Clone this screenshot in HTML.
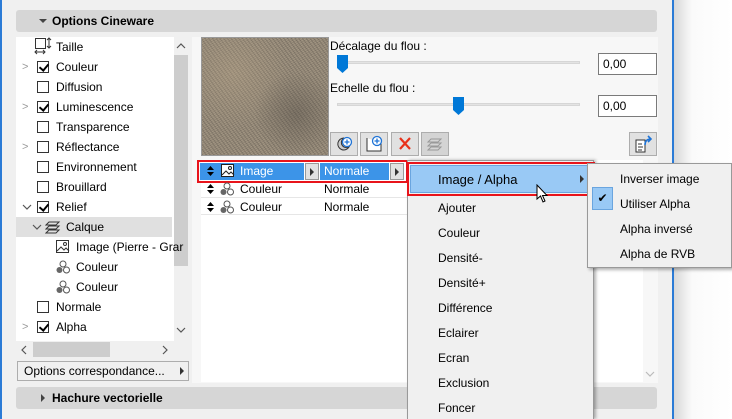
<!DOCTYPE html><html><head><meta charset="utf-8"><style>
*{box-sizing:border-box;margin:0;padding:0}
html,body{width:732px;height:419px;overflow:hidden}
body{background:#f0f0f0;font-family:"Liberation Sans",sans-serif;font-size:12px;color:#000;position:relative}
.a{position:absolute}
.hdr{background:#d6d6d6;border-radius:3px;font-weight:bold;font-size:12px;padding-left:36px;line-height:22px}
.tri{position:absolute;left:23px;top:9px;width:0;height:0;border-left:4px solid transparent;border-right:4px solid transparent;border-top:4px solid #444}
.trir{position:absolute;left:25px;top:7px;border-top:4px solid transparent;border-bottom:4px solid transparent;border-left:4px solid #444}
.row{position:absolute;height:20px;line-height:20px;white-space:nowrap}
.cb{position:absolute;width:12px;height:12px;border:1px solid #333;background:#fff;top:4px}
.cb.c::after{content:"";position:absolute;left:3px;top:0px;width:4px;height:7px;border:solid #000;border-width:0 2px 2px 0;transform:rotate(40deg)}
.chev{position:absolute;color:#999;font-size:11px}
.inp{background:#fff;border:1px solid #7a7a7a;padding-left:4px;line-height:20px}
.btn{background:#e1e1e1;border:1px solid #adadad}
.mi{position:absolute;left:438px;font-size:12px}
.si{position:absolute;left:620px;font-size:12px}
</style></head><body>
<div class="a" style="left:0;top:0;width:2px;height:419px;background:#2b7bd6"></div>
<div class="a" style="left:672px;top:0;width:2px;height:419px;background:#2b7bd6"></div>
<div class="a" style="left:674px;top:0;width:58px;height:419px;background:linear-gradient(90deg,#d8d8d8,#fafafa 18px,#fff)"></div>

<div class="a hdr" style="left:16px;top:10px;width:641px;height:22px"><span class="tri"></span>Options Cineware</div>

<!-- tree -->
<div class="a" style="left:16px;top:37px;width:158px;height:304px;background:#fff"></div>
<div class="a" style="left:174px;top:37px;width:17px;height:304px;background:#f0f0f0"></div>
<div class="a" style="left:174px;top:55px;width:14px;height:211px;background:#cdcdcd"></div>
<svg class="a" style="left:176px;top:42px" width="10" height="8"><path d="M1 6l4-4 4 4" fill="none" stroke="#555" stroke-width="1.2"/></svg>
<svg class="a" style="left:176px;top:326px" width="10" height="8"><path d="M1 2l4 4 4-4" fill="none" stroke="#555" stroke-width="1.2"/></svg>
<div class="a" style="left:16px;top:341px;width:175px;height:17px;background:#f0f0f0"></div>
<div class="a" style="left:33px;top:342px;width:77px;height:15px;background:#cdcdcd"></div>
<svg class="a" style="left:20px;top:345px" width="8" height="10"><path d="M6 1L2 5l4 4" fill="none" stroke="#555" stroke-width="1.2"/></svg>
<svg class="a" style="left:161px;top:345px" width="8" height="10"><path d="M2 1l4 4-4 4" fill="none" stroke="#555" stroke-width="1.2"/></svg>
<div class="a" style="left:16px;top:217px;width:156px;height:20px;background:#e0e0e0"></div>

<div class="row" style="left:36px;top:37px"><svg class="a" style="left:-2px;top:0" width="18" height="18"><rect x="1.5" y="1.5" width="10" height="10" fill="none" stroke="#333"/><path d="M15 1v10M13 3l2-2 2 2M13 9l2 2 2-2M1 15h10M3 13l-2 2 2 2M9 13l2 2-2 2" fill="none" stroke="#333"/></svg><span style="position:absolute;left:20px">Taille</span></div>
<div class="row" style="left:22px;top:57px"><span class="chev">&gt;</span><span class="cb c" style="left:15px"></span><span style="position:absolute;left:34px">Couleur</span></div>
<div class="row" style="left:22px;top:77px"><span class="cb" style="left:15px"></span><span style="position:absolute;left:34px">Diffusion</span></div>
<div class="row" style="left:22px;top:97px"><span class="chev">&gt;</span><span class="cb c" style="left:15px"></span><span style="position:absolute;left:34px">Luminescence</span></div>
<div class="row" style="left:22px;top:117px"><span class="cb" style="left:15px"></span><span style="position:absolute;left:34px">Transparence</span></div>
<div class="row" style="left:22px;top:137px"><span class="chev">&gt;</span><span class="cb" style="left:15px"></span><span style="position:absolute;left:34px">Réflectance</span></div>
<div class="row" style="left:22px;top:157px"><span class="cb" style="left:15px"></span><span style="position:absolute;left:34px">Environnement</span></div>
<div class="row" style="left:22px;top:177px"><span class="cb" style="left:15px"></span><span style="position:absolute;left:34px">Brouillard</span></div>
<div class="row" style="left:22px;top:197px"><svg class="a" style="left:0;top:7px" width="10" height="7"><path d="M1 1l4 4 4-4" fill="none" stroke="#555" stroke-width="1.2"/></svg><span class="cb c" style="left:15px"></span><span style="position:absolute;left:34px">Relief</span></div>
<div class="row" style="left:32px;top:217px"><svg class="a" style="left:0;top:7px" width="10" height="7"><path d="M1 1l4 4 4-4" fill="none" stroke="#555" stroke-width="1.2"/></svg><svg class="a" style="left:13px;top:3px" width="16" height="14"><path d="M4 2h10l-3 3H1zM4 6h10l-3 3H1zM4 10h10l-3 3H1z" fill="none" stroke="#333"/></svg><span style="position:absolute;left:34px">Calque</span></div>
<div class="row" style="left:56px;top:237px"><svg class="a" style="left:0;top:3px" width="14" height="14"><rect x=".5" y=".5" width="12" height="12" fill="#fff" stroke="#333"/><path d="M1 11l4-4 3 3 2-2 3 3" fill="none" stroke="#333"/><circle cx="9" cy="4" r="1.5" fill="none" stroke="#333"/></svg><span style="position:absolute;left:20px">Image (Pierre - Grar</span></div>
<div class="row" style="left:56px;top:257px"><svg class="a" style="left:0;top:3px" width="14" height="14"><circle cx="7" cy="4" r="3" fill="#fff" stroke="#555"/><circle cx="3.5" cy="10" r="3" fill="#666"/><circle cx="10.5" cy="10" r="3" fill="#fff" stroke="#555"/></svg><span style="position:absolute;left:20px">Couleur</span></div>
<div class="row" style="left:56px;top:277px"><svg class="a" style="left:0;top:3px" width="14" height="14"><circle cx="7" cy="4" r="3" fill="#fff" stroke="#555"/><circle cx="3.5" cy="10" r="3" fill="#666"/><circle cx="10.5" cy="10" r="3" fill="#fff" stroke="#555"/></svg><span style="position:absolute;left:20px">Couleur</span></div>
<div class="row" style="left:22px;top:297px"><span class="cb" style="left:15px"></span><span style="position:absolute;left:34px">Normale</span></div>
<div class="row" style="left:22px;top:317px"><span class="chev">&gt;</span><span class="cb c" style="left:15px"></span><span style="position:absolute;left:34px">Alpha</span></div>

<div class="a" style="left:17px;top:361px;width:172px;height:20px;border:1px solid #adadad;background:#f0f0f0;padding-left:6px;line-height:18px">Options correspondance...<span style="position:absolute;right:4px;top:5px;border-top:4px solid transparent;border-bottom:4px solid transparent;border-left:4px solid #333"></span></div>

<!-- right panel -->
<div class="a" style="left:192px;top:37px;width:466px;height:346px;background:#f7f7f7"></div>
<div class="a" style="left:201px;top:37px;width:128px;height:119px;border:1px solid #999;background:
radial-gradient(circle at 75% 65%,rgba(70,65,60,.35),transparent 35%),
radial-gradient(circle at 25% 30%,rgba(190,170,140,.35),transparent 45%),
repeating-linear-gradient(53deg,rgba(60,55,50,.25) 0 1px,transparent 1px 3px),
repeating-linear-gradient(-29deg,rgba(200,185,160,.3) 0 1px,transparent 1px 2px),#8f8474"></div>
<div class="a" style="left:330px;top:39px">Décalage du flou :</div>
<div class="a" style="left:337px;top:61px;width:243px;height:3px;background:#e3e3e3;border:1px solid #d6d6d6"></div>
<svg class="a" style="left:337px;top:55px" width="11" height="18"><path d="M0 0h11v13l-5.5 5L0 13z" fill="#0078d7"/></svg>
<div class="a inp" style="left:598px;top:53px;width:59px;height:22px">0,00</div>
<div class="a" style="left:330px;top:81px">Echelle du flou :</div>
<div class="a" style="left:337px;top:103px;width:243px;height:3px;background:#e3e3e3;border:1px solid #d6d6d6"></div>
<svg class="a" style="left:453px;top:97px" width="11" height="18"><path d="M0 0h11v13l-5.5 5L0 13z" fill="#0078d7"/></svg>
<div class="a inp" style="left:598px;top:95px;width:59px;height:22px">0,00</div>

<div class="a btn" style="left:330px;top:132px;width:28px;height:24px"><svg width="26" height="22"><path d="M13 5a6 6 0 1 0 5 9a5 5 0 0 1-5-9" fill="#ccc" stroke="#333"/><circle cx="16" cy="9" r="4.5" fill="#fff" stroke="#1e73d6" stroke-width="1.3"/><path d="M16 6.5v5M13.5 9h5" stroke="#1e73d6" stroke-width="1.3"/></svg></div>
<div class="a btn" style="left:360px;top:132px;width:28px;height:24px"><svg width="26" height="22"><path d="M6 5v13h14v-8" fill="#fff" stroke="#333"/><circle cx="16" cy="8" r="4.5" fill="#fff" stroke="#1e73d6" stroke-width="1.3"/><path d="M16 5.5v5M13.5 8h5" stroke="#1e73d6" stroke-width="1.3"/></svg></div>
<div class="a btn" style="left:391px;top:132px;width:28px;height:24px"><svg width="26" height="22"><path d="M8 5l10 11M18 5L8 16" stroke="#e8311a" stroke-width="2.2"/></svg></div>
<div class="a btn" style="left:421px;top:132px;width:28px;height:24px;background:#d4d4d4"><svg width="26" height="22"><path d="M9 6h10l-3 3H6zM9 10h10l-3 3H6zM9 14h10l-3 3H6z" fill="none" stroke="#999"/></svg></div>
<div class="a btn" style="left:629px;top:132px;width:28px;height:24px"><svg width="26" height="22"><path d="M6 7h9v12H6z" fill="#fff" stroke="#333"/><path d="M8 11h4M8 14h5M8 17h4" stroke="#333"/><path d="M15 12c0-4 2-6 6-6M18 3l3 3-3 3" fill="none" stroke="#1e73d6" stroke-width="1.6"/></svg></div>

<!-- layers list -->
<div class="a" style="left:201px;top:160px;width:442px;height:222px;background:#fff"></div>
<svg class="a" style="left:645px;top:371px" width="10" height="7"><path d="M1 1l4 4 4-4" fill="none" stroke="#bbb" stroke-width="1.2"/></svg>
<div class="a" style="left:201px;top:197px;width:206px;height:1px;background:#e6e6e6"></div>
<div class="a" style="left:201px;top:214px;width:206px;height:1px;background:#e6e6e6"></div>
<div class="a" style="left:197px;top:160px;width:211px;height:23px;border:2px solid #e8141b"></div>
<div class="a" style="left:200px;top:163px;width:104px;height:17px;background:#3c94e8"></div>
<div class="a" style="left:305px;top:163px;width:14px;height:17px;background:#e1e1e1;border:1px solid #999"><span class="a" style="left:4px;top:4px;border-top:4px solid transparent;border-bottom:4px solid transparent;border-left:4px solid #333"></span></div>
<div class="a" style="left:320px;top:163px;width:69px;height:17px;background:#3c94e8"></div>
<div class="a" style="left:390px;top:163px;width:14px;height:17px;background:#e1e1e1;border:1px solid #999"><span class="a" style="left:4px;top:4px;border-top:4px solid transparent;border-bottom:4px solid transparent;border-left:4px solid #333"></span></div>
<svg class="a" style="left:207px;top:165px" width="7" height="12"><path d="M0 5l3.5-4 3.5 4zM0 7l3.5 4 3.5-4z" fill="#000"/></svg>
<svg class="a" style="left:221px;top:164px" width="14" height="14"><rect x=".5" y=".5" width="12" height="12" fill="#fff" stroke="#222"/><path d="M1 11l4-4 3 3 2-2 3 3" fill="none" stroke="#222"/><circle cx="9" cy="4" r="1.5" fill="none" stroke="#222"/></svg>
<div class="a" style="left:240px;top:164px;color:#fff">Image</div>
<div class="a" style="left:324px;top:164px;color:#fff">Normale</div>
<svg class="a" style="left:207px;top:183px" width="7" height="12"><path d="M0 5l3.5-4 3.5 4zM0 7l3.5 4 3.5-4z" fill="#000"/></svg>
<svg class="a" style="left:220px;top:182px" width="14" height="14"><circle cx="7" cy="4" r="3" fill="#fff" stroke="#555"/><circle cx="3.5" cy="10" r="3" fill="#666"/><circle cx="10.5" cy="10" r="3" fill="#fff" stroke="#555"/></svg>
<div class="a" style="left:240px;top:182px">Couleur</div><div class="a" style="left:324px;top:182px">Normale</div>
<svg class="a" style="left:207px;top:201px" width="7" height="12"><path d="M0 5l3.5-4 3.5 4zM0 7l3.5 4 3.5-4z" fill="#000"/></svg>
<svg class="a" style="left:220px;top:200px" width="14" height="14"><circle cx="7" cy="4" r="3" fill="#fff" stroke="#555"/><circle cx="3.5" cy="10" r="3" fill="#666"/><circle cx="10.5" cy="10" r="3" fill="#fff" stroke="#555"/></svg>
<div class="a" style="left:240px;top:200px">Couleur</div><div class="a" style="left:324px;top:200px">Normale</div>

<div class="a hdr" style="left:16px;top:387px;width:641px;height:22px"><span class="trir"></span>Hachure vectorielle</div>

<!-- menu -->
<div class="a" style="left:407px;top:160px;width:187px;height:259px;background:#f0f0f0;border:1px solid #999;border-bottom:none;box-shadow:2px 0 3px rgba(0,0,0,.3)"></div>
<div class="a" style="left:407px;top:162px;width:188px;height:34px;border:2px solid #e8141b"></div>
<div class="a" style="left:410px;top:165px;width:182px;height:28px;background:#99c9f5;border:1px solid #6aa5df"></div>
<div class="a" style="left:580px;top:175px;border-top:4px solid transparent;border-bottom:4px solid transparent;border-left:4px solid #333"></div>
<div class="mi" style="top:172px;font-size:13px">Image / Alpha</div>
<div class="mi" style="top:201px">Ajouter</div>
<div class="mi" style="top:226px">Couleur</div>
<div class="mi" style="top:251px">Densité-</div>
<div class="mi" style="top:276px">Densité+</div>
<div class="mi" style="top:301px">Différence</div>
<div class="mi" style="top:326px">Eclairer</div>
<div class="mi" style="top:351px">Ecran</div>
<div class="mi" style="top:376px">Exclusion</div>
<div class="mi" style="top:401px">Foncer</div>
<svg class="a" style="left:536px;top:184px" width="14" height="20"><path d="M1 1v14l3.5-3 2.5 6 2-1-2.5-5.5H11z" fill="#fff" stroke="#000"/></svg>

<!-- submenu -->
<div class="a" style="left:587px;top:163px;width:145px;height:105px;background:#f0f0f0;border:1px solid #999;box-shadow:2px 2px 3px rgba(0,0,0,.3)"></div>
<div class="a" style="left:592px;top:187px;width:21px;height:23px;background:#99c9f5;border:1px solid #6aa5df;text-align:center;line-height:21px;font-size:12px">&#10004;</div>
<div class="si" style="top:172px">Inverser image</div>
<div class="si" style="top:197px">Utiliser Alpha</div>
<div class="si" style="top:222px">Alpha inversé</div>
<div class="si" style="top:247px">Alpha de RVB</div>
</body></html>
